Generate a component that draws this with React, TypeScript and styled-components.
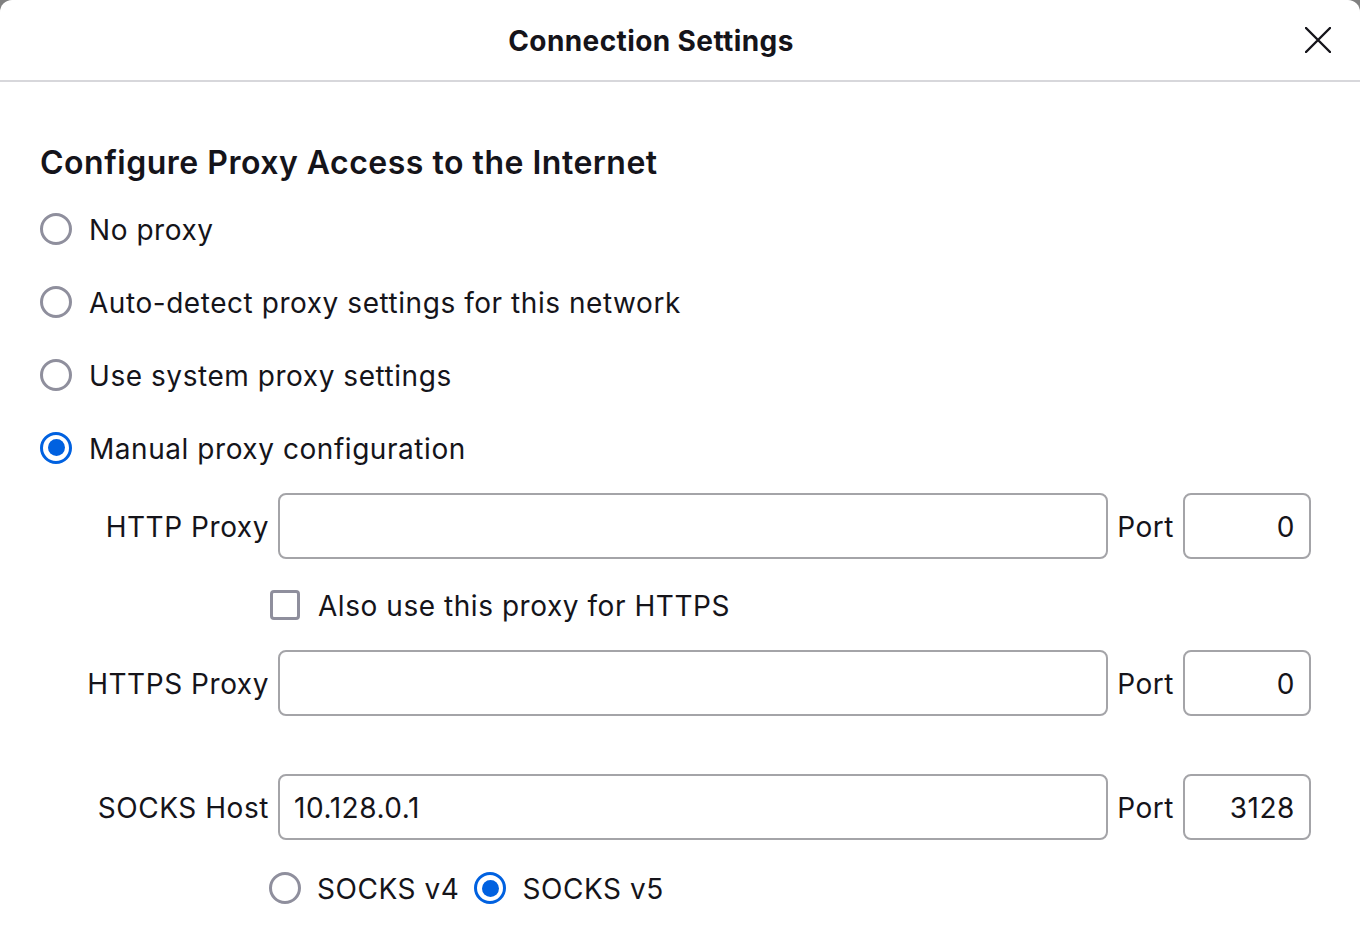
import React from "react";
import styled, { createGlobalStyle } from "styled-components";

const GlobalStyle = createGlobalStyle`
  html, body {
    margin: 0;
    padding: 0;
    background: #808080;
  }
  body {
    font-family: Inter, "Noto Sans", "Liberation Sans", sans-serif;
    color: #15141a;
  }
`;

const Dialog = styled.div`
  width: 1360px;
  height: 925px;
  background: #ffffff;
  border-radius: 12px 12px 0 0;
  overflow: hidden;
  box-sizing: border-box;
`;

const Header = styled.div`
  height: 80px;
  border-bottom: 2px solid #d7d7db;
  display: flex;
  align-items: center;
  padding: 0 26px 0 0;
`;

const Title = styled.h1`
  flex: 1;
  text-align: center;
  margin: 2px 0 0;
  font-size: 28px;
  font-weight: 700;
  letter-spacing: 0.4px;
`;

const CloseButton = styled.button`
  width: 32px;
  height: 32px;
  padding: 0;
  border: none;
  background: none;
  display: flex;
  align-items: center;
  justify-content: center;
  cursor: pointer;
`;

const Body = styled.div`
  padding: 61px 49px 0 40px;
  letter-spacing: 0.55px;
`;

const Heading = styled.h2`
  margin: 0 0 9px;
  font-size: 32px;
  line-height: 40px;
  font-weight: 600;
  letter-spacing: 0.5px;
`;

const RadioRow = styled.label`
  height: 73px;
  display: flex;
  align-items: center;
  gap: 17px;
  font-size: 28px;
`;

const RadioCircle = styled.span<{ $checked?: boolean }>`
  width: 32px;
  height: 32px;
  box-sizing: border-box;
  border-radius: 50%;
  border: 3px solid ${(p) => (p.$checked ? "#0061e0" : "#8f8f9d")};
  display: flex;
  align-items: center;
  justify-content: center;
  flex-shrink: 0;
  &::after {
    content: "";
    display: ${(p) => (p.$checked ? "block" : "none")};
    width: 17px;
    height: 17px;
    border-radius: 50%;
    background: #0061e0;
  }
`;

const RadioText = styled.span`
  padding-top: 2px;
`;

const ProxyGrid = styled.div`
  margin-top: 9px;
  display: grid;
  grid-template-columns: 229px 1fr auto 128px;
  column-gap: 9px;
  align-items: center;
  font-size: 28px;
`;

const FieldLabel = styled.span`
  text-align: right;
  padding-top: 2px;
`;

const PortLabel = styled.span`
  padding-top: 2px;
`;

const TextInput = styled.input<{ $port?: boolean }>`
  height: 66px;
  box-sizing: border-box;
  width: 100%;
  border: 2px solid #a4a4a8;
  border-radius: 8px;
  padding: 2px 14px 0;
  font: inherit;
  font-size: 28px;
  letter-spacing: 0.55px;
  color: #15141a;
  text-align: ${(p) => (p.$port ? "right" : "left")};
  outline: none;
  background: #fff;
`;

const CheckRow = styled.label`
  grid-column: 2 / 5;
  margin-left: -8px;
  height: 91px;
  display: flex;
  align-items: center;
  gap: 18px;
`;

const CheckBox = styled.span`
  width: 30px;
  height: 30px;
  box-sizing: border-box;
  border: 3px solid #8f8f9d;
  border-radius: 4px;
  flex-shrink: 0;
`;

const Spacer = styled.div<{ $h: number }>`
  grid-column: 1 / 5;
  height: ${(p) => p.$h}px;
`;

const SocksRow = styled.div`
  grid-column: 2 / 5;
  margin-left: -9px;
  padding-top: 24px;
  height: 48px;
  display: flex;
  align-items: center;
`;

const SocksOption = styled.label`
  display: flex;
  align-items: center;
  gap: 16px;
  margin-right: 15px;
`;

const CloseIcon = () => (
  <svg width="26" height="26" viewBox="0 0 26 26">
    <path
      d="M1 1 L25 25 M25 1 L1 25"
      stroke="#15141a"
      strokeWidth="2.4"
      strokeLinecap="round"
      fill="none"
    />
  </svg>
);

const proxyModes = [
  { label: "No proxy", checked: false },
  { label: "Auto-detect proxy settings for this network", checked: false },
  { label: "Use system proxy settings", checked: false },
  { label: "Manual proxy configuration", checked: true },
];

export default function App() {
  return (
    <>
      <GlobalStyle />
      <Dialog>
        <Header>
          <Title>Connection Settings</Title>
          <CloseButton aria-label="Close">
            <CloseIcon />
          </CloseButton>
        </Header>
        <Body>
          <Heading>Configure Proxy Access to the Internet</Heading>
          {proxyModes.map((m) => (
            <RadioRow key={m.label}>
              <RadioCircle $checked={m.checked} />
              <RadioText>{m.label}</RadioText>
            </RadioRow>
          ))}
          <ProxyGrid>
            <FieldLabel>HTTP Proxy</FieldLabel>
            <TextInput defaultValue="" />
            <PortLabel>Port</PortLabel>
            <TextInput $port defaultValue="0" />

            <CheckRow>
              <CheckBox />
              <RadioText>Also use this proxy for HTTPS</RadioText>
            </CheckRow>

            <FieldLabel>HTTPS Proxy</FieldLabel>
            <TextInput defaultValue="" />
            <PortLabel>Port</PortLabel>
            <TextInput $port defaultValue="0" />

            <Spacer $h={58} />

            <FieldLabel>SOCKS Host</FieldLabel>
            <TextInput defaultValue="10.128.0.1" />
            <PortLabel>Port</PortLabel>
            <TextInput $port defaultValue="3128" />

            <SocksRow>
              <SocksOption>
                <RadioCircle />
                <RadioText>SOCKS v4</RadioText>
              </SocksOption>
              <SocksOption>
                <RadioCircle $checked />
                <RadioText>SOCKS v5</RadioText>
              </SocksOption>
            </SocksRow>
          </ProxyGrid>
        </Body>
      </Dialog>
    </>
  );
}
